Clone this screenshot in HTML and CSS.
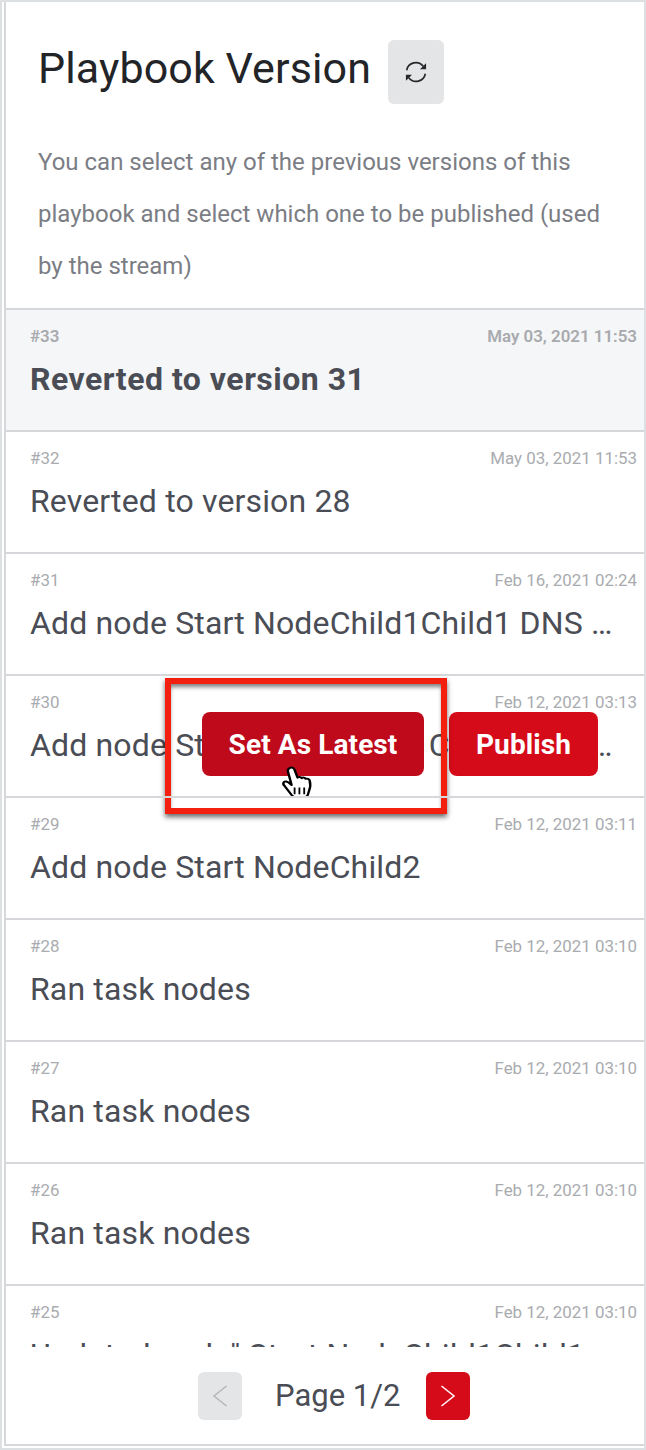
FILE: index.html
```html
<!DOCTYPE html>
<html lang="en">
<head>
<meta charset="utf-8">
<title>Playbook Version</title>
<link rel="stylesheet" href="styles.css">
</head>
<body>
<main class="frame">
  <section class="panel">
    <header class="head">
      <div class="title-row">
        <h1 class="title">Playbook Version</h1>
        <button class="refresh" aria-label="Refresh">
          <svg width="30" height="28" viewBox="0 0 24 24" fill="none" stroke="#26282c" stroke-width="1.4">
            <path d="M4 10.5a8 8 0 0 1 14.2-3.4"/>
            <path d="M20 13.5a8 8 0 0 1-14.2 3.4"/>
            <path d="M20.6 4.4v5.2h-5.2z" fill="#26282c" stroke="none"/>
            <path d="M3.4 19.6v-5.2h5.2z" fill="#26282c" stroke="none"/>
          </svg>
        </button>
      </div>
      <p class="intro">You can select any of the previous versions of this playbook and select which one to be published (used by the stream)</p>
    </header>
    <ul class="list">
      <li class="item current"><div class="meta"><span>#33</span><span>May 03, 2021 11:53</span></div><div class="name">Reverted to version 31</div></li>
      <li class="item"><div class="meta"><span>#32</span><span>May 03, 2021 11:53</span></div><div class="name">Reverted to version 28</div></li>
      <li class="item"><div class="meta"><span>#31</span><span>Feb 16, 2021 02:24</span></div><div class="name">Add node Start NodeChild1Child1 DNS Lookup</div></li>
      <li class="item hovered"><div class="meta"><span>#30</span><span>Feb 12, 2021 03:13</span></div><div class="name">Add node Start NodeChild1 Child2 DNS Lookup Node</div>
        <div class="actions"><button class="btn active">Set As Latest</button><button class="btn">Publish</button></div>
        <div class="highlight"></div>
        <svg class="cursor" width="36" height="35" viewBox="0 0 30 36" preserveAspectRatio="none">
          <path d="M9 2c2-1 3.500 0 4 2l2.500 8c1-1 2.500-1 3.500 0.500 1-1 2.500-.800 3.200.700 1.300-.600 2.800 0 3.300 1.500 1 4 .5 8-.5 11l-1 4c-.3 1.500-1.500 2.300-3 2.300h-7c-1.500 0-2.500-.8-3.300-2L5 21c-1.300-1.500-2-3-1-4.300 1-1.200 2.800-.8 4 .3l2.500 2.500L7.500 6C7 4.500 7.800 2.800 9 2z" fill="#fff" stroke="#000" stroke-width="2" stroke-linejoin="round"/>
          <path d="M13 22v7M17 22v7M21 22v7" stroke="#000" stroke-width="1.500"/>
        </svg>
      </li>
      <li class="item"><div class="meta"><span>#29</span><span>Feb 12, 2021 03:11</span></div><div class="name">Add node Start NodeChild2</div></li>
      <li class="item"><div class="meta"><span>#28</span><span>Feb 12, 2021 03:10</span></div><div class="name">Ran task nodes</div></li>
      <li class="item"><div class="meta"><span>#27</span><span>Feb 12, 2021 03:10</span></div><div class="name">Ran task nodes</div></li>
      <li class="item"><div class="meta"><span>#26</span><span>Feb 12, 2021 03:10</span></div><div class="name">Ran task nodes</div></li>
      <li class="item"><div class="meta"><span>#25</span><span>Feb 12, 2021 03:10</span></div><div class="name">Updated node" Start NodeChild1Child1</div></li>
    </ul>
    <nav class="pager">
      <button class="page-btn off" aria-label="Previous">
        <svg width="16" height="24" viewBox="0 0 16 24" fill="none" stroke="#b4b6ba" stroke-width="1.500"><path d="M14.500 2 2 12l12.500 10"/></svg>
      </button>
      <span class="page-label">Page 1/2</span>
      <button class="page-btn on" aria-label="Next">
        <svg width="16" height="24" viewBox="0 0 16 24" fill="none" stroke="#fff" stroke-width="1.500"><path d="M1.500 2 14 12 1.500 22"/></svg>
      </button>
    </nav>
  </section>
</main>
</body>
</html>
```
FILE: styles.css
```css
* { box-sizing: border-box; }
html, body { margin: 0; padding: 0; background: #fff; }
body { font-family: Roboto, "Liberation Sans", sans-serif; color: #4a4d55; }
.frame { width: 646px; height: 1450px; border: 2px solid #dde0e3; padding: 0 0 0 2px; }
.panel { height: 1444px; border-left: 2px solid #d5d7da; border-bottom: 2px solid #d5d7da; display: flex; flex-direction: column; overflow: hidden; }
.head { height: 306px; padding: 38px 0 0 32px; }
.title-row { display: flex; align-items: center; gap: 17px; height: 64px; }
.title { margin: 0; font-size: 43px; font-weight: 400; color: #222428; line-height: 56px; letter-spacing: .1px; padding-bottom: 8px; }
.refresh { width: 56px; height: 64px; border: 0; border-radius: 6px; background: #e4e5e7; display: flex; align-items: center; justify-content: center; padding: 0; }
.intro { margin: 32px 0 0; width: 585px; font-size: 24px; line-height: 52px; color: #7b7d84; }
.list { list-style: none; margin: 0; padding: 0; flex: 1; overflow: hidden; }
.item { position: relative; height: 122px; border-top: 2px solid #d5d7da; padding: 15px 7px 0 24px; }
.item.current { background: #f5f6f8; }
.item.current .meta { font-weight: 600; color: #a8aaae; }
.item.current .name { font-weight: 700; letter-spacing: .5px; }
.meta { display: flex; justify-content: space-between; font-size: 16.900px; line-height: 22px; color: #a9abaf; }
.name { margin-top: 10px; padding-right: 18px; font-size: 32px; line-height: 44px; letter-spacing: .15px; color: #4a4d55; white-space: nowrap; overflow: hidden; text-overflow: ellipsis; }
.actions { position: absolute; left: 196px; top: 36px; display: flex; gap: 25px; }
.btn { height: 64px; width: 222px; padding: 0; border: 0; border-radius: 8px; background: #d60b19; color: #fff; font: 700 28px Roboto, sans-serif; letter-spacing: .1px; }
.btn:last-child { width: 149px; }
.btn.active { background: #bf0a1b; }
.highlight { position: absolute; left: 159px; top: 2px; width: 282px; height: 136px; border: 6px solid #f4200f; box-shadow: 0 3px 5px rgba(0,0,0,.6), inset 0 4px 4px -1px rgba(0,0,0,.5); }
.cursor { position: absolute; left: 273px; top: 90px; }
.pager { height: 97px; display: flex; align-items: center; justify-content: center; gap: 25px; padding: 0 0 0 18px; }
.page-btn { width: 44px; height: 48px; border: 0; border-radius: 6px; padding: 0; display: flex; align-items: center; justify-content: center; }
.page-btn.off { background: #e4e5e7; }
.page-btn.on { background: #d60b19; }
.page-label { width: 126px; white-space: nowrap; font-size: 31px; color: #4a4d55; margin-left: 8px; }
```
